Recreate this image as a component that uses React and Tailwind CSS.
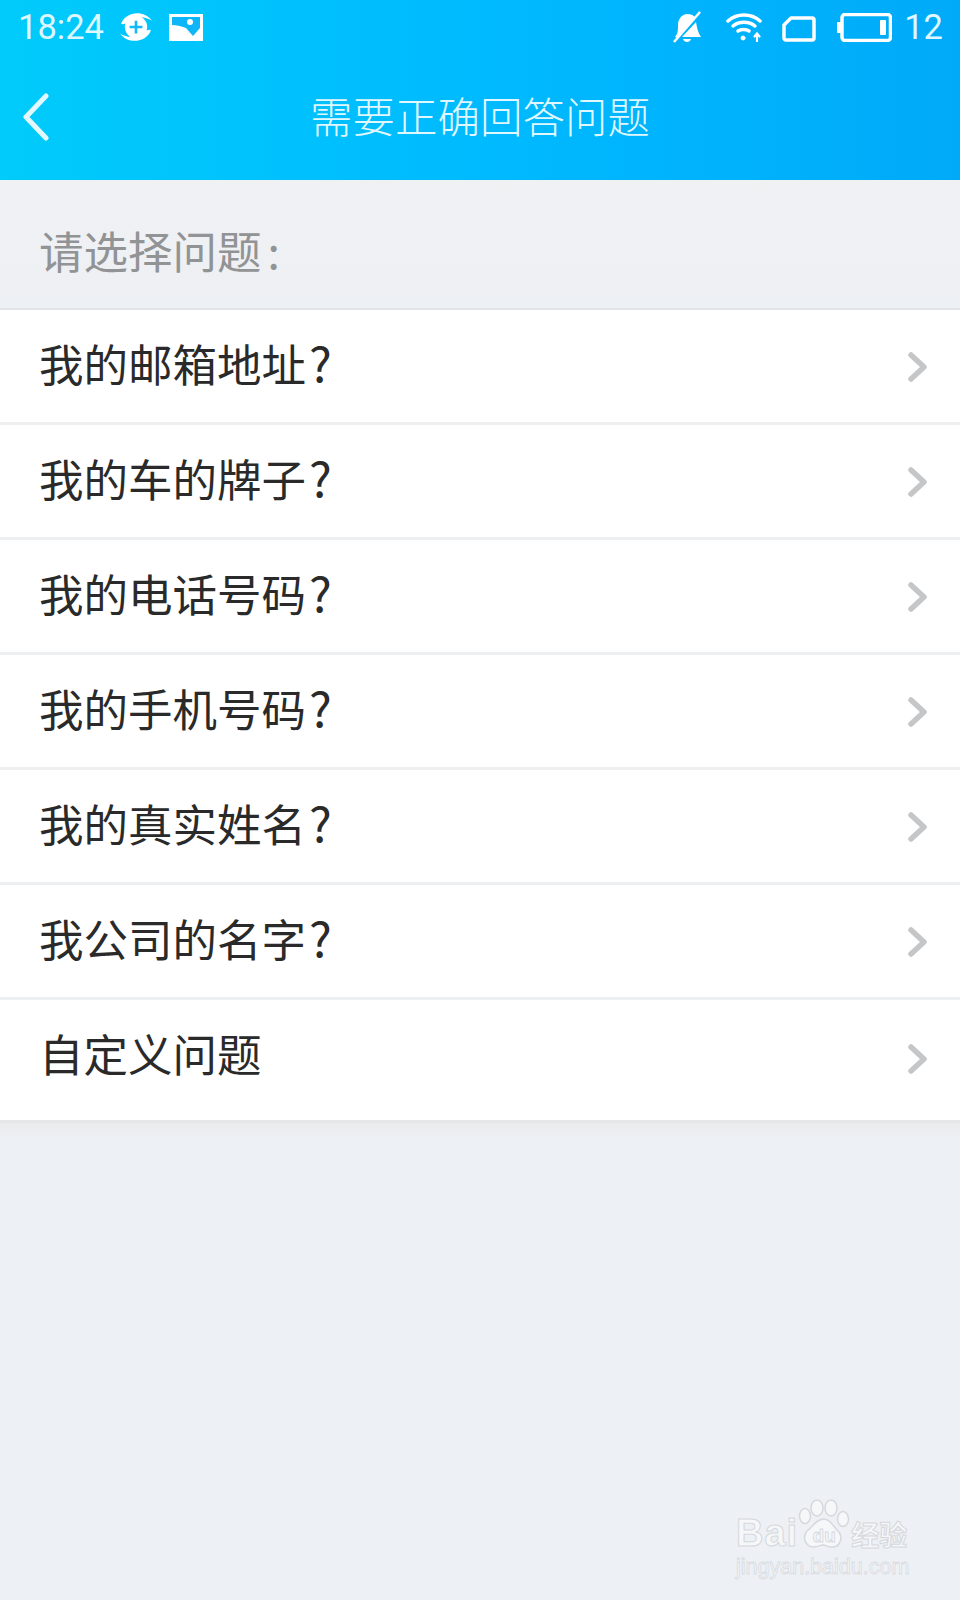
const rows = ["我的邮箱地址", "我的车的牌子", "我的电话号码", "我的手机号码", "我的真实姓名", "我公司的名字", "自定义问题"];

function Row({ label, last }) {
  return (
    <div className={`flex items-center justify-between pl-[39px] pr-[32px] bg-white border-b-[3px] ${last ? "h-[123px] border-[#e4e6e8]" : "h-[115px] border-[#eeeff0]"}`}>
      <span className={`flex items-baseline text-[44.5px] leading-none text-[#2a2a2a] font-normal ${last ? "-mt-[14px]" : "-mt-[10px]"}`}>
        {label}
        {!last && <span className="ml-[3px] text-[48px] leading-none font-normal">?</span>}
      </span>
      <svg className={last ? "-mt-[3px]" : "mt-[1px]"} width="20" height="32" viewBox="0 0 20 32" fill="none"><path d="M3 4l13 12L3 28" stroke="#c4c6c8" strokeWidth="5.500" strokeLinecap="round" strokeLinejoin="round" /></svg>
    </div>
  );
}

function StatusBar() {
  return (
    <div className="h-[54px] flex items-center justify-between pl-[18px] pr-[17px] text-white">
      <div className="flex items-center">
        <span className="text-[34.500px] font-normal leading-none font-['Roboto',sans-serif] text-[#def7ff]">18:24</span>
        <svg className="ml-[15px]" width="34" height="34" viewBox="0 0 32 32" fill="none">
          <path d="M2 13C5 3 22-2 31 10c-6-4-16-5-22 1-2 2-6 3-7 2z" fill="#fff" />
          <path d="M30 19C27 29 10 34 1 22c6 4 16 5 22-1 2-2 6-3 7-2z" fill="#fff" />
          <circle cx="16" cy="16" r="10.500" fill="#fff" />
          <path d="M16 10v12M10 16h12" stroke="#12b8f8" strokeWidth="2.500" />
        </svg>
        <svg className="ml-[16px]" width="34" height="27" viewBox="0 0 34 27">
          <path d="M0 0h34v27H0z" fill="#fff" />
          <path d="M3 3h28v11l-7 8-7-8c-5-2-10-3-14-3z" fill="#0eb6f9" />
          <circle cx="21" cy="8" r="3" fill="#fff" />
        </svg>
      </div>
      <div className="flex items-center">
        <svg width="30" height="32" viewBox="0 0 30 32" fill="none">
          <path d="M3 26c3-3 3-7 3-12C6 8 10 3 15 3c4 0 6 1 8 3L6 27z" fill="#fff" />
          <path d="M24 11c1 6 2 11 5 15H10z" fill="#fff" />
          <path d="M11 28c1 4 7 4 8 0z" fill="#fff" />
          <path d="M2 31L28 1" stroke="#fff" strokeWidth="2.500" />
        </svg>
        <svg className="ml-[24px]" width="36" height="30" viewBox="0 0 36 30" fill="none" stroke="#fff" strokeWidth="3.500" strokeLinecap="round">
          <path d="M2 9c9-8 23-8 32 0" />
          <path d="M7 14c6-5 16-5 22 0" />
          <path d="M12 19c3-2 8-2 11 0" />
          <circle cx="17" cy="26" r="2" fill="#fff" strokeWidth="1" />
          <path d="M31 29v-7M28.500 24.500l2.500-3 2.500 3" strokeWidth="2.200" />
        </svg>
        <svg className="ml-[20px] mt-[4px]" width="34" height="26" viewBox="0 0 34 26" fill="none"><path d="M9 2h21a2 2 0 0 1 2 2v18a2 2 0 0 1-2 2H4a2 2 0 0 1-2-2V9z" stroke="#fff" strokeWidth="3.500" strokeLinejoin="round" /></svg>
        <svg className="ml-[20px]" width="56" height="29" viewBox="0 0 56 29" fill="none">
          <rect x="6" y="1.500" width="48.500" height="26" rx="3" stroke="#fff" strokeWidth="3.500" />
          <rect x="1" y="9" width="4" height="11" rx="1" fill="#fff" />
          <rect x="44" y="7" width="6" height="15" rx="1" fill="#fff" />
        </svg>
        <span className="ml-[12px] text-[34.500px] font-normal leading-none font-['Roboto',sans-serif] text-[#def7ff]">12</span>
      </div>
    </div>
  );
}

export default function App() {
  return (
    <div className="relative w-[960px] h-[1600px] overflow-hidden bg-[#edf0f5] font-['Noto_Sans_CJK_SC','Noto_Sans',sans-serif]">
      <header className="h-[180px] bg-gradient-to-r from-[#00cbfa] via-[#00baff] to-[#00aaf8]">
        <StatusBar />
        <div className="relative h-[126px] flex items-center justify-center">
          <svg className="absolute left-[22px] top-[39px]" width="28" height="48" viewBox="0 0 28 48" fill="none"><path d="M24 3L4 24l20 21" stroke="#e2f8ff" strokeWidth="5" strokeLinecap="round" strokeLinejoin="round" /></svg>
          <h1 className="text-[42.5px] leading-none font-light text-[#dff7ff] -mt-[4px]">需要正确回答问题</h1>
        </div>
      </header>
      <div className="h-[130px] flex items-center pl-[39px] pt-[12px] bg-gradient-to-b from-[#f0f1f3] to-[#edf0f4] border-b-[2px] border-[#e2e4e7]">
        <span className="text-[44.5px] leading-none font-normal text-[#929395]">请选择问题<span className="ml-[6px]">:</span></span>
      </div>
      <div>
        {rows.map((r, i) => <Row key={r} label={r} last={i === rows.length - 1} />)}
      </div>
      <div className="h-[16px] bg-gradient-to-b from-[#eaebec] to-[#edf0f5]" />
      <div className="absolute left-[736px] top-[1497px] w-[174px] h-[84px] text-[#f6f7f9]">
        <div className="flex items-end h-[54px] whitespace-nowrap">
          <span className="text-[38px] leading-[36px] font-bold font-['Liberation_Sans',sans-serif] tracking-[1px] [-webkit-text-stroke:1px_#d5d8dc]">Bai</span>
          <div className="relative w-[52px] h-[52px] shrink-0">
            <svg width="52" height="52" viewBox="0 0 52 52" fill="#f6f7f9" stroke="#d5d8dc" strokeWidth="1.500">
              <ellipse cx="7" cy="17" rx="5.500" ry="7.500" />
              <ellipse cx="19" cy="9" rx="6" ry="8" />
              <ellipse cx="33" cy="9" rx="6" ry="8" />
              <ellipse cx="45" cy="20" rx="5.500" ry="7.500" />
              <path d="M26 20c7 0 9 8 14 12 6 6 2 17-7 16-4 0-5-2-8-2s-5 2-9 2c-9 0-12-10-7-16 6-4 9-12 17-12z" />
            </svg>
            <span className="absolute left-0 right-0 top-[27px] text-center text-[19px] leading-none font-bold font-['Liberation_Sans',sans-serif] [-webkit-text-stroke:0.800px_#d5d8dc]">du</span>
          </div>
          <span className="ml-[1px] shrink-0 text-[28px] leading-[34px] font-bold [-webkit-text-stroke:1px_#d5d8dc]">经验</span>
        </div>
        <div className="mt-[3px] text-[21.500px] leading-[26px] font-['Liberation_Sans',sans-serif] whitespace-nowrap [-webkit-text-stroke:0.800px_#d8dbe0]">jingyan.baidu.com</div>
      </div>
    </div>
  );
}
